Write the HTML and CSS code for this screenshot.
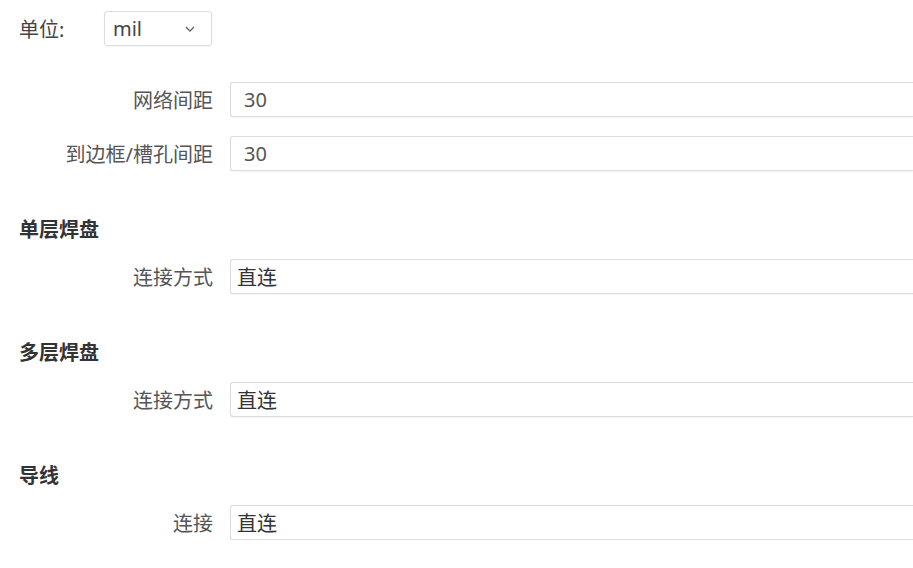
FILE: index.html
```html
<!DOCTYPE html>
<html lang="zh-CN">
<head>
  <meta charset="UTF-8">
  <meta name="viewport" content="width=device-width, initial-scale=1.0">
  <title>覆铜设置</title>
  <link rel="stylesheet" href="styles.css">
</head>
<body>

  <div class="panel">
    <!-- 单位 -->
    <div class="unit-row">
      <span class="unit-label">单位:</span>
      <div class="unit-select">
        <span>mil</span>
        <svg class="chevron" width="10" height="6" viewBox="0 0 10 6">
          <path d="M1 1 L5 5 L9 1" fill="none" stroke="#666" stroke-width="1.4"/>
        </svg>
      </div>
    </div>

    <!-- 间距 -->
    <div class="group first">
      <div class="field">
        <label>网络间距</label>
        <input class="num" type="text" value="30">
      </div>
      <div class="field">
        <label>到边框/槽孔间距</label>
        <input class="num" type="text" value="30">
      </div>
    </div>

    <div class="group">
      <h3>单层焊盘</h3>
      <div class="field">
        <label>连接方式</label>
        <input class="pick" type="text" value="直连" readonly>
      </div>
    </div>

    <div class="group">
      <h3>多层焊盘</h3>
      <div class="field">
        <label>连接方式</label>
        <input class="pick" type="text" value="直连" readonly>
      </div>
    </div>

    <div class="group">
      <h3>导线</h3>
      <div class="field">
        <label>连接</label>
        <input class="pick" type="text" value="直连" readonly>
      </div>
    </div>
  </div>

</body>
</html>
```

FILE: styles.css
```css
body {
  margin: 0;
  padding: 0;
  background-color: #fff;
  font-family: 'Noto Sans', 'Noto Sans CJK SC', sans-serif;
  font-size: 20px;
  color: #555;
  overflow: hidden;
}

.panel {
  padding: 11px 0 0 19px;
}

.unit-row {
  display: flex;
  align-items: center;
  height: 35px;
}

.unit-label {
  width: 85px;
  color: #444;
}

.unit-select {
  box-sizing: border-box;
  width: 108px;
  height: 35px;
  border: 1px solid #ddd;
  border-radius: 3px;
  padding: 0 16px 0 8px;
  display: flex;
  align-items: center;
  justify-content: space-between;
  color: #444;
  box-shadow: 0 1px 2px rgba(0, 0, 0, 0.05);
}

.chevron {
  display: block;
}

.group {
  margin-top: 49px;
}

.group.first {
  margin-top: 36px;
}

h3 {
  margin: 0 0 19px 0;
  font-size: 20px;
  line-height: 20px;
  font-weight: bold;
  color: #333;
}

.field {
  display: grid;
  grid-template-columns: 194px 1fr;
  column-gap: 17px;
  align-items: center;
}

.field + .field {
  margin-top: 19px;
}

.field label {
  text-align: right;
  color: #555;
  white-space: nowrap;
}

/* 输入框延伸到面板右侧之外，所以不画右边框 */
.field input {
  box-sizing: border-box;
  width: 100%;
  height: 35px;
  border: 1px solid #ddd;
  border-right: none;
  border-radius: 3px 0 0 3px;
  font-family: inherit;
  font-size: 20px;
  outline: none;
  box-shadow: 0 1px 2px rgba(0, 0, 0, 0.05);
}

.num {
  padding: 0 13px;
  color: #555;
}

.pick {
  padding: 0 6px;
  color: #333;
}
```
